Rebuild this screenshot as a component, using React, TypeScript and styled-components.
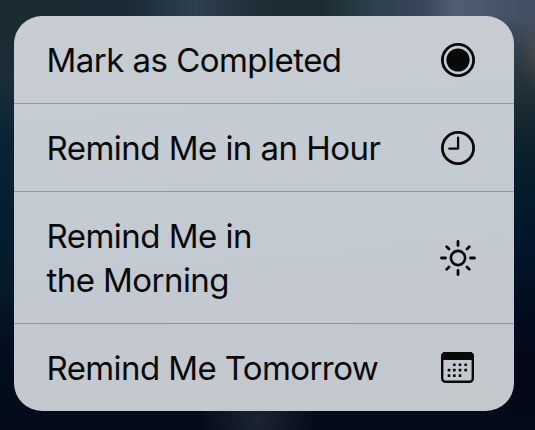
import React from "react";
import styled, { createGlobalStyle } from "styled-components";

const GlobalStyle = createGlobalStyle`
  * { box-sizing: border-box; }
  body { margin: 0; }
`;

const Backdrop = styled.main`
  width: 535px;
  height: 430px;
  padding: 16px 21px 19px 14px;
  overflow: hidden;
  background:
    linear-gradient(90deg, #1a2a31 0, #1a2b36 130px, #2e3f50 195px, #1f2d36 260px, #1c2b31 320px, #22343d 345px, #2f4050 375px, #38475a 425px, #525e71 455px, #46546a 495px, #434f62 535px) 0 0 / 535px 17px no-repeat,
    radial-gradient(ellipse 20px 45px at 540px 50px, rgba(92, 88, 88, 0.45), transparent),
    linear-gradient(#414f64 0, #434f62 20px, #36424e 45px, #28353c 75px, #192a32 110px, #0b202c 155px, #051a2a 200px, #03152b 250px, #020e20 300px, #030818 360px, #040914 430px) 100% 0 / 60px 411px no-repeat,
    radial-gradient(ellipse 60px 60px at 258px 420px, rgba(32, 41, 55, 0.85), transparent),
    linear-gradient(#1a2a31 0, #1a2b34 40px, #1a2d39 80px, #0a2337 140px, #051d31 220px, #051b2b 280px, #03101f 340px, #020c1b 410px, #030a17 430px);
`;

const Menu = styled.ul`
  display: flex;
  flex-direction: column;
  width: 500px;
  height: 395px;
  margin: 0;
  padding: 0;
  list-style: none;
  overflow: hidden;
  border-radius: 28px;
  background: linear-gradient(175deg, #c8cdd3 0%, #c4cbd2 35%, #c3c9d1 65%, #c4c8cd 100%);
`;

const Item = styled.li<{ $height: number }>`
  display: flex;
  flex: none;
  align-items: center;
  justify-content: space-between;
  height: ${({ $height }) => $height}px;
  padding: 0 36px 0 32.5px;
  color: #080909;
  box-shadow: inset 0 -1px #8f97a2;
`;

const Label = styled.div`
  display: flex;
  flex-direction: column;
  font-family: Inter, "Liberation Sans", sans-serif;
  font-size: 33px;
  font-weight: 400;
  line-height: 44px;
  white-space: nowrap;
`;

const Line = styled.span<{ $spacing: number }>`
  letter-spacing: ${({ $spacing }) => $spacing}px;
`;

const Icon = styled.svg`
  flex: none;
  width: 40px;
  height: 40px;
  overflow: visible;
  fill: none;
  stroke: currentColor;
  stroke-width: 2.8;
  stroke-linecap: round;
  stroke-linejoin: round;
`;

const RecordIcon = () => (
  <Icon viewBox="0 0 40 40">
    <circle cx="20" cy="20" r="15.6" />
    <circle cx="20" cy="20" r="11.6" fill="currentColor" stroke="none" />
  </Icon>
);

const ClockIcon = () => (
  <Icon viewBox="0 0 40 40">
    <circle cx="20" cy="20" r="15.6" />
    <path d="M20.1 9.7V20.6H11.3" strokeWidth="2.3" />
  </Icon>
);

const SunIcon = () => (
  <Icon viewBox="0 0 40 40">
    <circle cx="20" cy="20" r="7.1" strokeWidth="2.6" />
    {[0, 45, 90, 135, 180, 225, 270, 315].map((angle) => (
      <path key={angle} d={angle % 90 ? "M20 3.9V7.3" : "M20 3.5V7.5"} transform={`rotate(${angle} 20 20)`} />
    ))}
  </Icon>
);

const DAYS = [
  [16.3, 16.8], [22, 16.8], [27.7, 16.8],
  [11, 22.1], [16.3, 22.1], [22, 22.1], [27.7, 22.1],
  [11, 27.6], [16.3, 27.6], [22, 27.6],
];

const CalendarIcon = () => (
  <Icon viewBox="0 0 40 40">
    <rect x="4.2" y="5.2" width="30.6" height="28.6" rx="3.4" strokeWidth="2.4" />
    <path d="M3 12V8.5Q3 4 7.5 4H31.5Q36 4 36 8.5V12Z" fill="currentColor" stroke="none" />
    {DAYS.map(([x, y]) => (
      <rect key={`${x}-${y}`} x={x - 1.3} y={y - 1.3} width="2.6" height="2.6" rx="0.5" fill="currentColor" stroke="none" />
    ))}
  </Icon>
);

type Entry = { height: number; lines: [string, number][]; icon: React.ReactNode };

const ENTRIES: Entry[] = [
  { height: 88, lines: [["Mark as Completed", -0.53]], icon: <RecordIcon /> },
  { height: 88, lines: [["Remind Me in an Hour", -0.53]], icon: <ClockIcon /> },
  { height: 132, lines: [["Remind Me in", -0.52], ["the Morning", -0.56]], icon: <SunIcon /> },
  { height: 88, lines: [["Remind Me Tomorrow", -0.6]], icon: <CalendarIcon /> },
];

export default function App() {
  return (
    <>
      <GlobalStyle />
      <Backdrop>
        <Menu>
          {ENTRIES.map(({ height, lines, icon }) => (
            <Item key={lines[0][0]} $height={height}>
              <Label>
                {lines.map(([text, spacing]) => (
                  <Line key={text} $spacing={spacing}>{text}</Line>
                ))}
              </Label>
              {icon}
            </Item>
          ))}
        </Menu>
      </Backdrop>
    </>
  );
}
